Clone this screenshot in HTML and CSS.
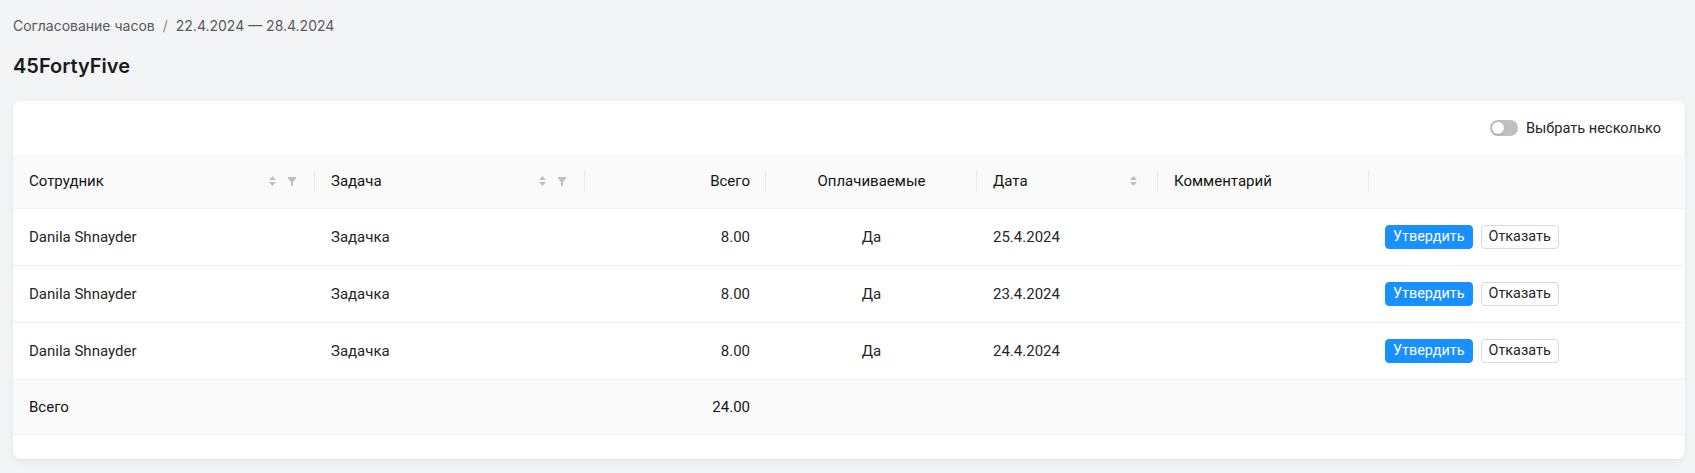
FILE: index.html
```html
<!DOCTYPE html>
<html lang="ru">
<head>
<meta charset="utf-8">
<title>Согласование часов</title>
<link rel="stylesheet" href="styles.css">
</head>
<body>
<div class="page">
  <nav class="breadcrumb">
    <span class="crumb">Согласование часов</span>
    <span class="sep">/</span>
    <span class="crumb">22.4.2024 — 28.4.2024</span>
  </nav>
  <h1 class="title">45FortyFive</h1>
  <section class="card">
    <div class="toolbar">
      <span class="switch"><span class="knob"></span></span>
      <span class="switch-label">Выбрать несколько</span>
    </div>
    <table class="table">
      <colgroup>
        <col class="c1"><col class="c2"><col class="c3"><col class="c4"><col class="c5"><col class="c6"><col class="c7">
      </colgroup>
      <thead>
        <tr>
          <th><div class="th"><span class="th-title">Сотрудник</span>
            <span class="ico sort"><svg width="7" height="10" viewBox="0 0 7 10"><path d="M3.5 0L7 4H0z"/><path d="M0 6h7L3.5 10z"/></svg></span>
            <span class="ico filter"><svg width="8" height="9" viewBox="0 0 8 9"><path d="M0 0h8v1.6L5 5v4H3V5L0 1.6z"/></svg></span>
          </div></th>
          <th><div class="th"><span class="th-title">Задача</span>
            <span class="ico sort"><svg width="7" height="10" viewBox="0 0 7 10"><path d="M3.5 0L7 4H0z"/><path d="M0 6h7L3.5 10z"/></svg></span>
            <span class="ico filter"><svg width="8" height="9" viewBox="0 0 8 9"><path d="M0 0h8v1.6L5 5v4H3V5L0 1.6z"/></svg></span>
          </div></th>
          <th><div class="th right"><span class="th-title">Всего</span></div></th>
          <th><div class="th center"><span class="th-title">Оплачиваемые</span></div></th>
          <th><div class="th"><span class="th-title">Дата</span>
            <span class="ico sort solo"><svg width="7" height="10" viewBox="0 0 7 10"><path d="M3.5 0L7 4H0z"/><path d="M0 6h7L3.5 10z"/></svg></span>
          </div></th>
          <th><div class="th"><span class="th-title">Комментарий</span></div></th>
          <th><div class="th last"></div></th>
        </tr>
      </thead>
      <tbody>
        <tr>
          <td>Danila Shnayder</td><td>Задачка</td><td class="num">8.00</td><td class="mid">Да</td><td>25.4.2024</td><td></td>
          <td><div class="actions"><button class="btn primary">Утвердить</button><button class="btn">Отказать</button></div></td>
        </tr>
        <tr>
          <td>Danila Shnayder</td><td>Задачка</td><td class="num">8.00</td><td class="mid">Да</td><td>23.4.2024</td><td></td>
          <td><div class="actions"><button class="btn primary">Утвердить</button><button class="btn">Отказать</button></div></td>
        </tr>
        <tr>
          <td>Danila Shnayder</td><td>Задачка</td><td class="num">8.00</td><td class="mid">Да</td><td>24.4.2024</td><td></td>
          <td><div class="actions"><button class="btn primary">Утвердить</button><button class="btn">Отказать</button></div></td>
        </tr>
      </tbody>
      <tfoot>
        <tr>
          <td>Всего</td><td></td><td class="num">24.00</td><td></td><td></td><td></td><td></td>
        </tr>
      </tfoot>
    </table>
  </section>
</div>
</body>
</html>
```

FILE: styles.css
```css
* { box-sizing: border-box; }

html, body {
  margin: 0;
  background: #f3f4f6;
}

.page {
  padding: 15px 10px 14px 13px;
  font-family: Inter, "Noto Sans", sans-serif;
}

.breadcrumb {
  display: flex;
  align-items: center;
  font-size: 14px;
  line-height: 22px;
  color: #595959;
}

.sep {
  margin: 0 8px;
  color: #8c8c8c;
}

.title {
  margin: 15px 0 0;
  font-size: 20px;
  line-height: 28px;
  font-weight: 600;
  color: #1a1a1a;
}

.card {
  margin-top: 21px;
  background: #fff;
  border-radius: 8px;
  padding: 16px 0 24px;
  box-shadow: 0 1px 2px rgba(0, 0, 0, 0.04), 0 3px 10px rgba(0, 0, 0, 0.05);
  font-family: Roboto, "Liberation Sans", sans-serif;
}

.toolbar {
  display: flex;
  justify-content: flex-end;
  align-items: center;
  gap: 8px;
  height: 22px;
  padding-right: 24px;
  margin-bottom: 15px;
}

.switch {
  display: inline-flex;
  align-items: center;
  width: 28px;
  height: 16px;
  border-radius: 8px;
  background: #bfbfbf;
  padding: 2px;
}

.knob {
  width: 12px;
  height: 12px;
  border-radius: 50%;
  background: #fff;
  box-shadow: 0 1px 2px rgba(0, 35, 11, 0.2);
}

.switch-label {
  font-size: 14.6px;
  color: #262626;
}

.table {
  width: 100%;
  border-collapse: collapse;
  table-layout: fixed;
  font-size: 15px;
  line-height: 22px;
  color: #262626;
}

.c1 { width: 302px; }
.c2 { width: 270px; }
.c3 { width: 181px; }
.c4 { width: 211px; }
.c5 { width: 181px; }
.c6 { width: 211px; }
.c7 { width: 316px; }

th {
  background: #fafafa;
  padding: 16px 0 16px 16px;
  border-bottom: 1px solid #f0f0f0;
  font-weight: 400;
  text-align: left;
  color: #141414;
}

.th {
  display: flex;
  align-items: center;
  height: 22px;
  padding-right: 15px;
  border-right: 1px solid #ececec;
}

.th.last { border-right: 0; }

.th-title { flex: 1; }
.th.right .th-title { text-align: right; }
.th.center .th-title { text-align: center; }

.ico {
  display: inline-flex;
  align-items: center;
  justify-content: center;
  fill: #bfbfbf;
}

.ico.sort { width: 11px; margin-right: 8px; }
.ico.sort.solo { margin-right: 3px; }
.ico.filter { width: 12px; margin-right: 1px; }

td {
  padding: 16px;
  border-bottom: 1px solid #f0f0f0;
  vertical-align: middle;
  white-space: nowrap;
}

td.num { text-align: right; }
td.mid { text-align: center; }

tfoot td {
  background: #fafafa;
  font-weight: 400;
  color: #141414;
}

.actions {
  display: flex;
  gap: 8px;
}

.btn {
  height: 24px;
  padding: 0 7px;
  font-family: Roboto, "Liberation Sans", sans-serif;
  font-size: 14.4px;
  line-height: 22px;
  border-radius: 4px;
  border: 1px solid #d9d9d9;
  background: #fff;
  color: #262626;
  cursor: pointer;
}

.btn.primary {
  background: #1890ff;
  border-color: #1890ff;
  color: #fff;
}
```
